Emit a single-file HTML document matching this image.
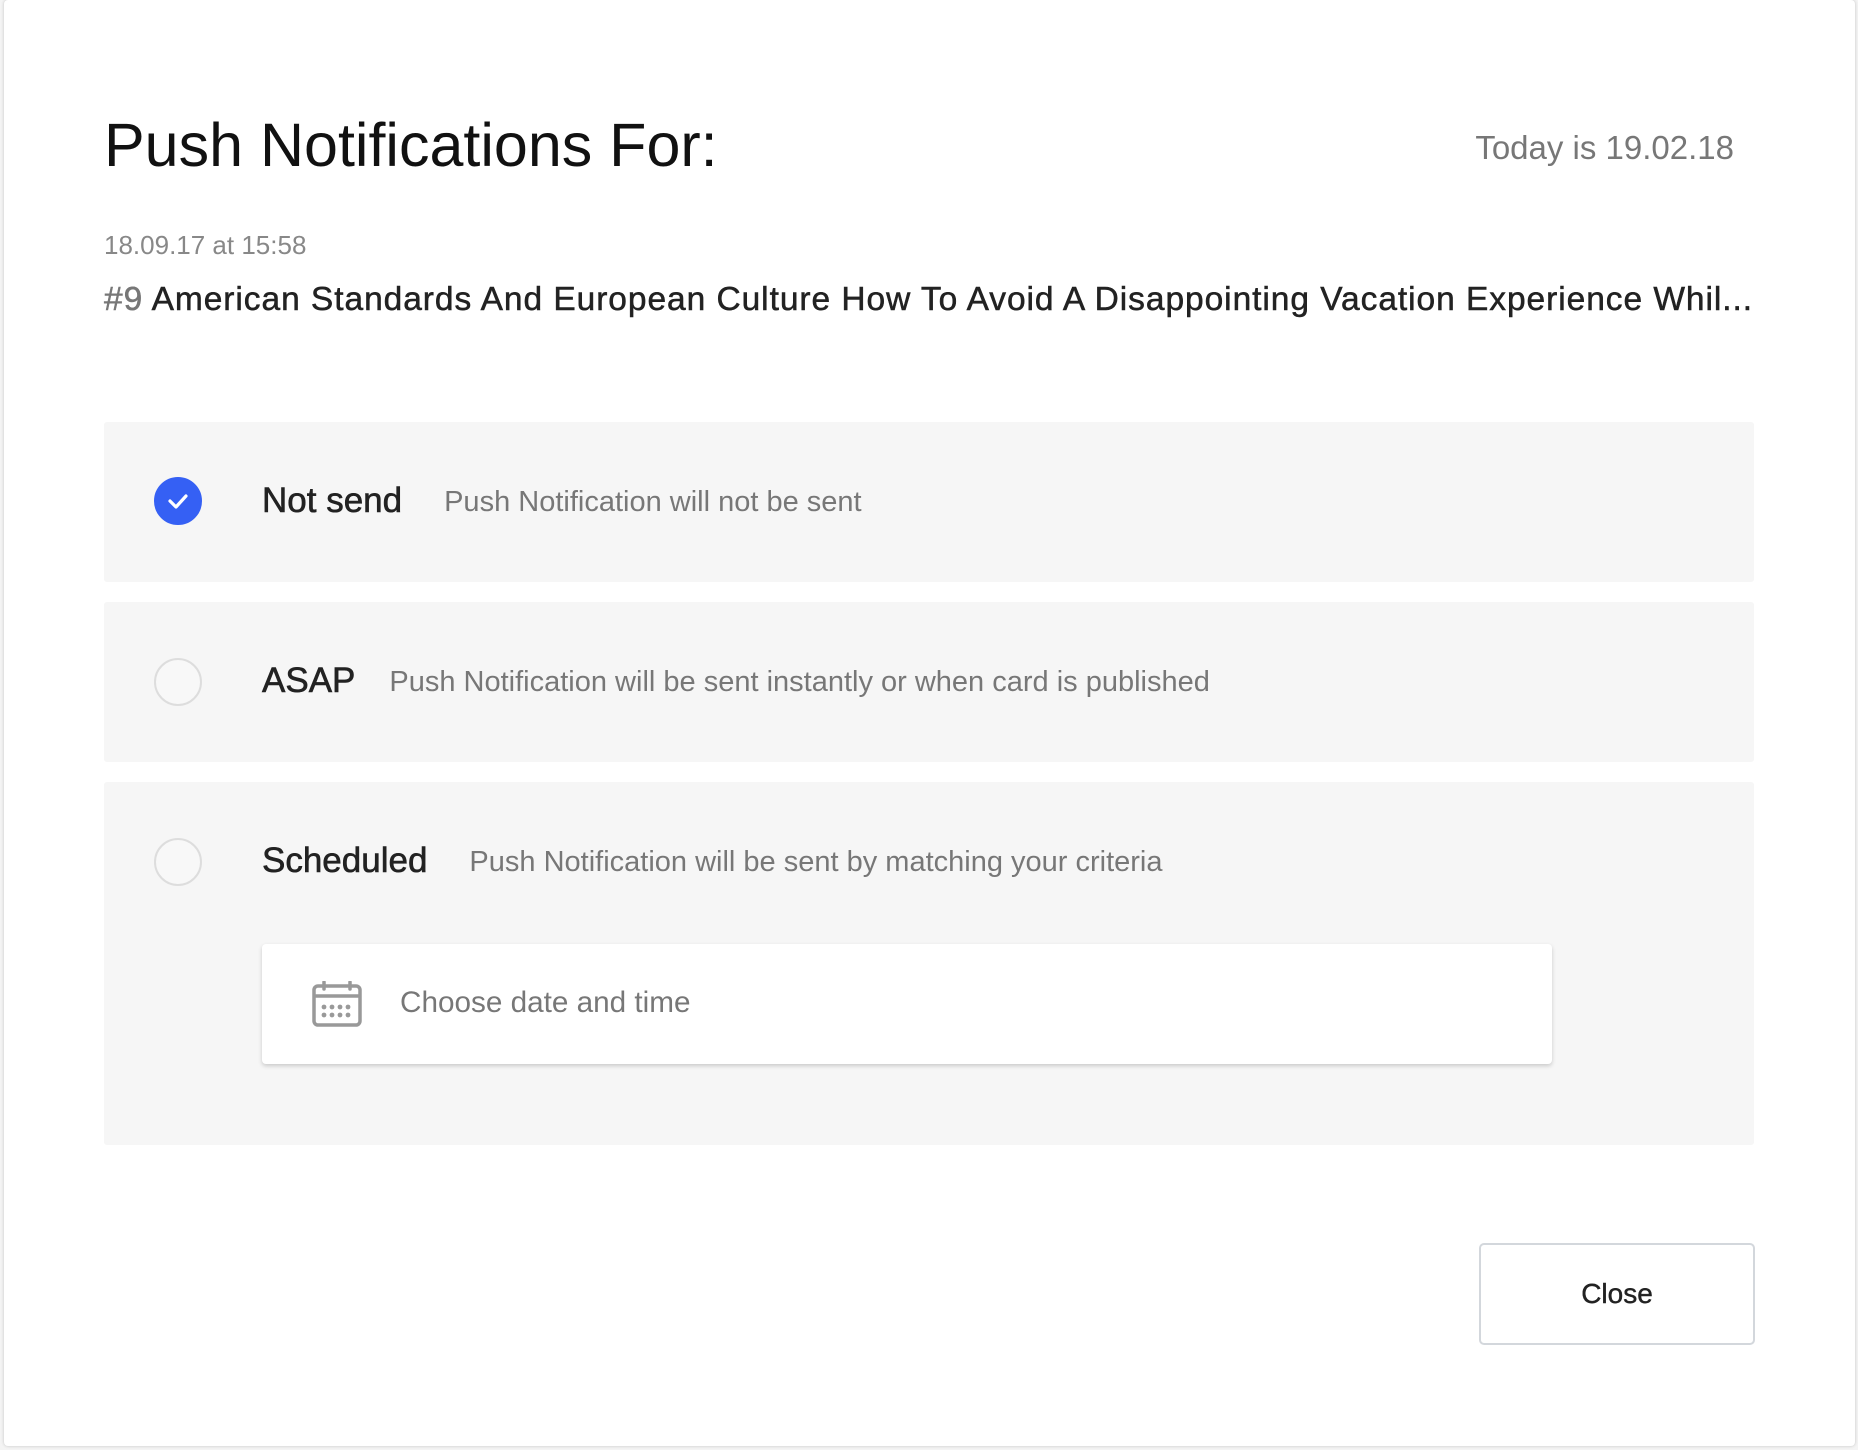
<!DOCTYPE html>
<html><head><meta charset="utf-8"><style>
*{margin:0;padding:0;box-sizing:border-box}
body{width:1858px;height:1450px;background:#f4f4f4;font-family:"Liberation Sans",sans-serif;overflow:hidden;position:relative}
.card{position:absolute;left:4px;top:0;width:1851px;height:1446px;background:#fff;border-radius:4px;box-shadow:0 0 3px rgba(0,0,0,.2)}
.abs{position:absolute;white-space:nowrap}
.title{left:104px;top:107px;font-size:61px;color:#111;line-height:76px}
.today{right:124px;top:128px;font-size:33px;color:#777;line-height:40px}
.date{left:104px;top:229px;font-size:26px;color:#888;line-height:32px}
.head{left:104px;top:280px;font-size:33.5px;letter-spacing:0.95px;color:#222;line-height:40px;-webkit-text-stroke:.5px #222}
.head span{color:#777;-webkit-text-stroke:.5px #777}
.opt{position:absolute;left:104px;width:1650px;background:#f6f6f6;border-radius:3px}
.radio{position:absolute;left:50px;width:48px;height:48px;border-radius:50%;border:2px solid #ddd;background:#f8f8f8}
.radio.on{background:#3560f4;border-color:#3560f4}
.lbl{position:absolute;left:158px;font-size:35px;color:#222;line-height:40px;white-space:nowrap;-webkit-text-stroke:.6px #222}
.desc{font-size:29px;color:#777;-webkit-text-stroke:0;margin-left:42px;vertical-align:1px}
.input{position:absolute;left:158px;top:162px;width:1290px;height:120px;background:#fff;border-radius:4px;box-shadow:0 2px 4px rgba(0,0,0,.18)}
.btn{position:absolute;left:1479px;top:1243px;width:276px;height:102px;border:2px solid #d3d7dc;border-radius:5px;font-size:28px;color:#222;text-align:center;line-height:98px;-webkit-text-stroke:.4px #222}
</style></head><body>
<div class="card"></div>
<div class="abs title">Push Notifications For:</div>
<div class="abs today">Today is 19.02.18</div>
<div class="abs date">18.09.17 at 15:58</div>
<div class="abs head"><span>#9</span> American Standards And European Culture How To Avoid A Disappointing Vacation Experience Whil...</div>

<div class="opt" style="top:422px;height:160px">
  <div class="radio on" style="top:55px"><svg width="44" height="44" viewBox="0 0 44 44"><path d="M14 22l6 6 10-11" stroke="#fff" stroke-width="3.2" fill="none" stroke-linecap="round" stroke-linejoin="round"/></svg></div>
  <div class="lbl" style="top:59px">Not send<span class="desc">Push Notification will not be sent</span></div>
</div>
<div class="opt" style="top:602px;height:160px">
  <div class="radio" style="top:56px"></div>
  <div class="lbl" style="top:59px">ASAP<span class="desc" style="margin-left:34px">Push Notification will be sent instantly or when card is published</span></div>
</div>
<div class="opt" style="top:782px;height:363px">
  <div class="radio" style="top:56px"></div>
  <div class="lbl" style="top:59px">Scheduled<span class="desc">Push Notification will be sent by matching your criteria</span></div>
  <div class="input">
    <svg style="position:absolute;left:50px;top:37px" width="50" height="46" viewBox="0 0 50 46">
      <rect x="2" y="5" width="46" height="39" rx="4" fill="none" stroke="#999" stroke-width="3.5"/>
      <line x1="2" y1="15" x2="48" y2="15" stroke="#999" stroke-width="3.5"/>
      <line x1="12" y1="1" x2="12" y2="8" stroke="#999" stroke-width="3.5" stroke-linecap="round"/>
      <line x1="38" y1="1" x2="38" y2="8" stroke="#999" stroke-width="3.5" stroke-linecap="round"/>
      <g fill="#999"><circle cx="12" cy="26" r="2.4"/><circle cx="20" cy="26" r="2.4"/><circle cx="28" cy="26" r="2.4"/><circle cx="36" cy="26" r="2.4"/>
      <circle cx="12" cy="34" r="2.4"/><circle cx="20" cy="34" r="2.4"/><circle cx="28" cy="34" r="2.4"/><circle cx="36" cy="34" r="2.4"/></g>
    </svg>
    <div class="abs" style="left:138px;top:41px;font-size:29.7px;color:#777;line-height:36px">Choose date and time</div>
  </div>
</div>
<div class="btn">Close</div>
</body></html>
